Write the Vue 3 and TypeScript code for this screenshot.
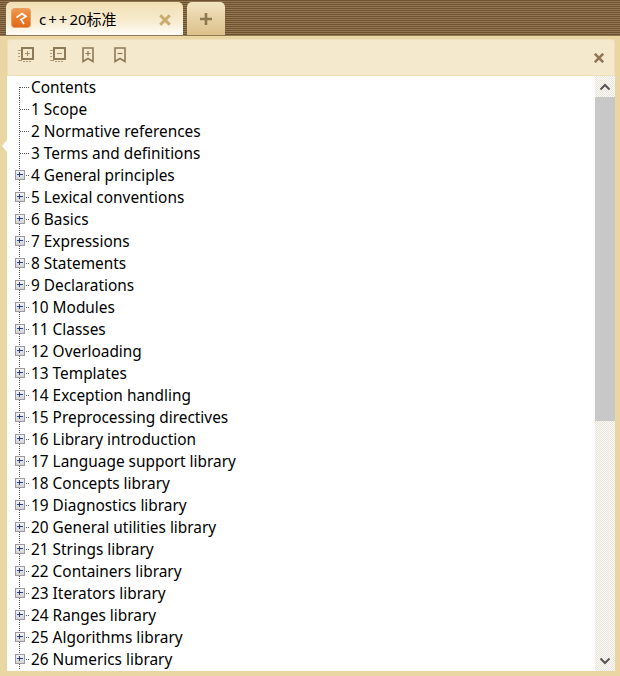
<script setup lang="ts">
const rows: { label: string; expandable: boolean }[] = [
  'Contents', '1 Scope', '2 Normative references', '3 Terms and definitions',
].map((label) => ({ label, expandable: false })).concat([
  '4 General principles', '5 Lexical conventions', '6 Basics', '7 Expressions', '8 Statements',
  '9 Declarations', '10 Modules', '11 Classes', '12 Overloading', '13 Templates',
  '14 Exception handling', '15 Preprocessing directives', '16 Library introduction',
  '17 Language support library', '18 Concepts library', '19 Diagnostics library',
  '20 General utilities library', '21 Strings library', '22 Containers library',
  '23 Iterators library', '24 Ranges library', '25 Algorithms library', '26 Numerics library',
].map((label) => ({ label, expandable: true })))
</script>

<template>
  <div class="app">
    <header class="tabbar">
      <div class="tab">
        <svg class="logo" width="20" height="20" viewBox="0 0 20 20">
          <defs>
            <linearGradient id="lg" x1="0" y1="0" x2="0" y2="1">
              <stop offset="0" stop-color="#ee9a55" />
              <stop offset="0.5" stop-color="#ec7d2a" />
              <stop offset="1" stop-color="#dc6a1c" />
            </linearGradient>
          </defs>
          <rect x="0.5" y="0.5" width="19" height="19" rx="3" fill="url(#lg)" stroke="#e8a068" />
          <path d="M5.5 9.5 L11 5.5 L15 8.5 L10 11.5 L13 16" fill="none" stroke="#fff" stroke-width="1.7" />
        </svg>
        <span class="tab-title">c<span class="plus">++</span>20标准</span>
        <svg class="tab-close" width="12" height="12" viewBox="0 0 12 12">
          <path d="M1.2 1.2 L10.8 10.8 M10.8 1.2 L1.2 10.8" stroke="#c9ab6e" stroke-width="3" />
        </svg>
      </div>
      <div class="new-tab">
        <svg width="14" height="14" viewBox="0 0 14 14">
          <path d="M7 1 V13 M1 7 H13" stroke="#8d7850" stroke-width="2.6" />
        </svg>
      </div>
    </header>

    <main class="panel">
      <div class="notch"></div>
      <div class="toolbar">
        <div class="tools">
          <svg width="16" height="16" viewBox="0 0 16 16" fill="none">
            <path d="M0 3.5h3M0 6.5h2M0 9.5h2M0 13.5h4M5 14.5h2M8 14.5h2M11 14.5h2" stroke="#b09a72" />
            <rect x="4" y="1" width="11" height="11" stroke="#8f7a58" stroke-width="2" />
            <path d="M7 6.5h5M9.5 4v5" stroke="#a08c68" />
          </svg>
          <svg width="16" height="16" viewBox="0 0 16 16" fill="none">
            <path d="M0 3.5h3M0 6.5h2M0 9.5h2M0 13.5h4M5 14.5h2M8 14.5h2M11 14.5h2" stroke="#b09a72" />
            <rect x="4" y="1" width="11" height="11" stroke="#8f7a58" stroke-width="2" />
            <path d="M7 6.5h5" stroke="#a08c68" />
          </svg>
          <svg width="12" height="16" viewBox="0 0 12 16" fill="none">
            <path d="M1 1h10v13.5l-5-3-5 3z" stroke="#8f7a58" stroke-width="1.6" />
            <path d="M3.5 6.5h5M6 4v5" stroke="#8f7a58" stroke-width="1.2" />
          </svg>
          <svg class="tool-last" width="12" height="16" viewBox="0 0 12 16" fill="none">
            <path d="M1 1h10v13.5l-5-3-5 3z" stroke="#8f7a58" stroke-width="1.6" />
            <path d="M3.5 6.5h5" stroke="#8f7a58" stroke-width="1.2" />
          </svg>
        </div>
        <svg width="10" height="10" viewBox="0 0 10 10">
          <path d="M0.8 0.8 L9.2 9.2 M9.2 0.8 L0.8 9.2" stroke="#8f7654" stroke-width="2.6" />
        </svg>
      </div>

      <div class="content">
        <ul class="tree">
          <li v-for="(row, i) in rows" :key="row.label" class="row">
            <span class="gutter" :class="{ first: i === 0 }">
              <span v-if="row.expandable" class="expander"></span>
            </span>
            <span class="label">{{ row.label }}</span>
          </li>
        </ul>
        <div class="scrollbar">
          <button class="arrow">
            <svg width="12" height="8" viewBox="0 0 12 8"><path d="M1.5 6.5 L6 2 L10.5 6.5" fill="none" stroke="#555" stroke-width="2" /></svg>
          </button>
          <div class="thumb"></div>
          <div class="track"></div>
          <button class="arrow">
            <svg width="12" height="8" viewBox="0 0 12 8"><path d="M1.5 1.5 L6 6 L10.5 1.5" fill="none" stroke="#555" stroke-width="2" /></svg>
          </button>
        </div>
      </div>
    </main>
  </div>
</template>

<style>
html, body { margin: 0; padding: 0; overflow: hidden; }
</style>

<style scoped>
.app {
  width: 620px;
  height: 676px;
  display: flex;
  flex-direction: column;
  font-family: "Noto Sans", "Noto Sans CJK SC", sans-serif;
  color: #000;
  background: #e9d6a3;
}
.tabbar {
  height: 36px;
  box-sizing: border-box;
  padding: 2px 0 0 6px;
  display: flex;
  gap: 4px;
  background: repeating-linear-gradient(to bottom, #6f5030 0 1px, #927850 1px 2px);
}
.tab {
  width: 177px;
  height: 33px;
  box-sizing: border-box;
  padding: 6px 12px 0 5px;
  display: flex;
  align-items: flex-start;
  border-radius: 5px 5px 0 0;
  background: linear-gradient(to bottom, #f1dfb4 0%, #f7ecd0 60%, #fffdf8 100%);
}
.logo { flex: none; margin-top: 0; }
.tab-title { flex: 1; margin-left: 8px; font-size: 15px; line-height: 22px; }
.plus { letter-spacing: 2px; margin-left: 2px; }
.tab-close { margin-top: 6px; }
.new-tab {
  width: 38px;
  height: 33px;
  border-radius: 5px 5px 0 0;
  background: linear-gradient(to bottom, #f2e4c2, #dcc08a);
  display: flex;
  align-items: center;
  justify-content: center;
}
.panel {
  position: relative;
  flex: 1;
  min-height: 0;
  padding: 3px 5px 5px 7px;
  display: flex;
  flex-direction: column;
}
.notch {
  position: absolute;
  left: 2px;
  top: 104px;
  width: 0;
  height: 0;
  border-style: solid;
  border-width: 6px 5px 6px 0;
  border-color: transparent #fff transparent transparent;
}
.toolbar {
  height: 37px;
  flex: none;
  box-sizing: border-box;
  padding: 0 10px 0 10px;
  display: flex;
  align-items: center;
  justify-content: space-between;
  background: #f5e9cd;
  border: 1px solid #eedfb9;
  border-radius: 3px 3px 0 0;
}
.tools { display: flex; align-items: center; gap: 16px; margin-top: -5px; }
.tool-last { margin-left: 4px; }
.content {
  flex: 1;
  min-height: 0;
  display: flex;
  background: #fff;
}
.tree {
  flex: 1;
  margin: 0;
  padding: 0;
  list-style: none;
  overflow: hidden;
}
.row { height: 22px; display: flex; align-items: flex-start; }
.gutter {
  position: relative;
  flex: none;
  width: 24px;
  height: 22px;
  background:
    repeating-linear-gradient(to bottom, #555 0 1px, transparent 1px 2px) 12px 0 / 1px 100% no-repeat;
}
.gutter.first { background-position: 12px 11px; }
.gutter::after {
  content: "";
  position: absolute;
  left: 13px;
  top: 11px;
  width: 10px;
  height: 1px;
  background: repeating-linear-gradient(to right, #555 0 1px, transparent 1px 2px);
}
.expander {
  position: absolute;
  left: 8px;
  top: 6px;
  width: 8px;
  height: 8px;
  z-index: 1;
  border: 1px solid #9a9aa0;
  background:
    linear-gradient(#24408a, #24408a) 1px 3px / 6px 1px no-repeat,
    linear-gradient(#24408a, #24408a) 3px 1px / 1px 5px no-repeat,
    linear-gradient(to bottom, #f4f4f4, #d4d4d4);
}
.label { padding-top: 2px; font-size: 15.4px; line-height: 20px; white-space: nowrap; }
.scrollbar {
  width: 20px;
  flex: none;
  display: flex;
  flex-direction: column;
  background: repeating-conic-gradient(#e9e5da 0 25%, #fbfaf6 0 50%) 0 0 / 2px 2px;
}
.arrow {
  height: 21px;
  flex: none;
  padding: 0;
  border: 0;
  background: transparent;
  display: flex;
  align-items: center;
  justify-content: center;
}
.thumb { height: 324px; flex: none; background: #c8c8c8; }
.track { flex: 1; }
</style>
